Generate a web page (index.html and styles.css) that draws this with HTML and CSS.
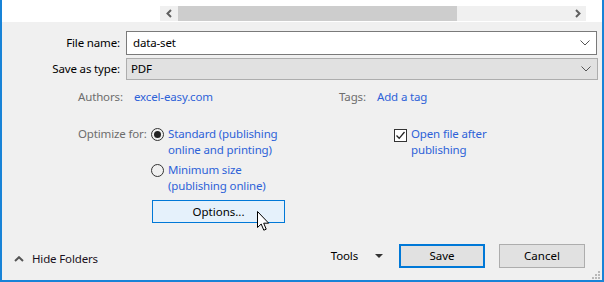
FILE: index.html
```html
<!DOCTYPE html>
<html lang="en">
<head>
  <meta charset="utf-8">
  <title>Save As</title>
  <link rel="stylesheet" href="styles.css">
</head>
<body>
  <div class="window">
    <div class="browser">
      <div class="hscroll">
        <span class="hscroll_arrow">
          <svg width="8" height="9" viewBox="0 0 8 9"><path d="M6 1 L2.5 4.5 L6 8" fill="none" stroke="#606060" stroke-width="2"/></svg>
        </span>
        <span class="hscroll_track"><span class="hscroll_thumb"></span></span>
        <span class="hscroll_arrow">
          <svg width="8" height="9" viewBox="0 0 8 9"><path d="M2 1 L5.5 4.5 L2 8" fill="none" stroke="#606060" stroke-width="2"/></svg>
        </span>
      </div>
    </div>

    <div class="form">
      <label class="form_label">File name:</label>
      <div class="field field-input">
        <span>data-set</span>
        <svg class="chev" width="10" height="6" viewBox="0 0 10 6"><path d="M0.5 0.5 L5 5 L9.5 0.5" fill="none" stroke="#555" stroke-width="1"/></svg>
      </div>
      <label class="form_label">Save as type:</label>
      <div class="field field-select">
        <span>PDF</span>
        <svg class="chev" width="10" height="6" viewBox="0 0 10 6"><path d="M0.5 0.5 L5 5 L9.5 0.5" fill="none" stroke="#555" stroke-width="1"/></svg>
      </div>
    </div>

    <div class="meta">
      <div class="meta_row">
        <div class="meta_col">
          <span class="key key-authors">Authors:</span>
          <a class="link">excel-easy.com</a>
        </div>
        <div class="meta_col">
          <span class="key key-tags">Tags:</span>
          <a class="link">Add a tag</a>
        </div>
      </div>
      <div class="meta_row meta_row-opt">
        <div class="meta_col">
          <span class="key key-opt">Optimize for:</span>
          <div class="radios">
            <label class="radio radio-on"><span class="radio_dot"></span><span class="link">Standard (publishing<br>online and printing)</span></label>
            <label class="radio"><span class="radio_dot"></span><span class="link">Minimum size<br>(publishing online)</span></label>
            <button class="options">Options...</button>
          </div>
        </div>
        <div class="meta_col">
          <label class="check">
            <span class="check_box">
              <svg width="11" height="11" viewBox="0 0 11 11"><path d="M1.5 5.5 L4.2 8.3 L9.5 2" fill="none" stroke="#222" stroke-width="1.3"/></svg>
            </span>
            <span class="link">Open file after<br>publishing</span>
          </label>
        </div>
      </div>
    </div>

    <div class="footer">
      <div class="folders">
        <svg width="10" height="6" viewBox="0 0 10 6"><path d="M1 5 L5 1.2 L9 5" fill="none" stroke="#555" stroke-width="2"/></svg>
        <span>Hide Folders</span>
      </div>
      <div class="actions">
        <div class="tools">
          <span>Tools</span>
          <svg width="8" height="4" viewBox="0 0 8 4"><path d="M0 0 L8 0 L4 4 Z" fill="#333"/></svg>
        </div>
        <button class="btn btn-primary">Save</button>
        <button class="btn">Cancel</button>
      </div>
    </div>

    <svg class="grip" width="8" height="8" viewBox="0 0 8 8">
      <rect x="6" y="0" width="2" height="2" fill="#b8b8b8"/>
      <rect x="3" y="3" width="2" height="2" fill="#b8b8b8"/>
      <rect x="6" y="3" width="2" height="2" fill="#b8b8b8"/>
      <rect x="0" y="6" width="2" height="2" fill="#b8b8b8"/>
      <rect x="3" y="6" width="2" height="2" fill="#b8b8b8"/>
      <rect x="6" y="6" width="2" height="2" fill="#b8b8b8"/>
    </svg>

    <svg class="cursor" width="13" height="21" viewBox="0 0 13 21">
      <path d="M0.5 0.5 L0.5 16.5 L4.2 13 L6.8 19.2 L9.2 18.2 L6.7 12.2 L11.7 12.2 Z" fill="#fff" stroke="#000" stroke-width="1" stroke-linejoin="miter"/>
    </svg>
  </div>
</body>
</html>
```

FILE: styles.css
```css
html,
body {
  margin: 0;
  padding: 0;
}

body {
  width: 604px;
  height: 282px;
  overflow: hidden;
  font-family: "Noto Sans", "Open Sans", sans-serif;
  font-size: 11.5px;
  letter-spacing: -0.15px;
  line-height: 16px;
  color: #000;
}

.window {
  position: relative;
  box-sizing: border-box;
  width: 604px;
  height: 282px;
  display: flex;
  flex-direction: column;
  background: #f0f0f0;
  border: 2px solid #1883d7;
  border-top: 0;
}

/* file list strip with its horizontal scrollbar */
.browser {
  height: 22px;
  background: #fff;
  box-sizing: border-box;
  padding: 6px 16px 0 158px;
}
.hscroll {
  display: flex;
  height: 15px;
  background: #f0f0f0;
}
.hscroll_arrow {
  width: 17px;
  display: flex;
  align-items: center;
  justify-content: center;
}
.hscroll_track {
  flex: 1;
  display: flex;
  padding-left: 1px;
}
.hscroll_thumb {
  width: 279px;
  background: #cdcdcd;
}

/* name + type */
.form {
  display: grid;
  grid-template-columns: 118px 471px;
  grid-template-rows: 24px 22px;
  column-gap: 6px;
  row-gap: 3px;
  margin-top: 9px;
}
.form_label {
  text-align: right;
  align-self: center;
}
.field {
  box-sizing: border-box;
  display: flex;
  align-items: center;
  justify-content: space-between;
  padding: 0 4px 0 6px;
}
.field-input {
  background: #fff;
  border: 1px solid #7a7a7a;
}
.field-select {
  background: #e1e1e1;
  border: 1px solid #adadad;
  padding-left: 4px;
  margin-right: -1px;
}
.chev {
  margin-right: 2px;
}

/* authors, tags, optimize */
.meta {
  padding-left: 76px;
  margin-top: 9px;
}
.meta_row {
  display: flex;
}
.meta_row-opt {
  margin-top: 21px;
}
.meta_col {
  display: flex;
  align-items: flex-start;
}
.meta_col:first-child {
  width: 261px;
}
.key {
  color: #6d6d6d;
  white-space: nowrap;
}
.key-authors {
  width: 56px;
}
.key-tags {
  width: 38px;
}
.key-opt {
  width: 73px;
}
.link {
  color: #2d62d8;
  white-space: nowrap;
}

.radios {
  display: flex;
  flex-direction: column;
  align-items: flex-start;
}
.radio {
  display: flex;
  align-items: flex-start;
  gap: 4px;
  margin-bottom: 4px;
}
.radio_dot {
  box-sizing: border-box;
  width: 13px;
  height: 13px;
  margin-top: 2px;
  border: 1px solid #333;
  border-radius: 50%;
  display: flex;
  align-items: center;
  justify-content: center;
}
.radio-on .radio_dot::after {
  content: "";
  width: 7px;
  height: 7px;
  border-radius: 50%;
  background: #222;
}
.options {
  margin: 2px 0 0 1px;
  width: 133px;
  height: 23px;
  box-sizing: border-box;
  background: #e5f1fb;
  border: 1px solid #0078d7;
  font: inherit;
  color: #000;
  padding: 0;
}

.check {
  display: flex;
  align-items: flex-start;
  gap: 4px;
  margin-left: 55px;
}
.check_box {
  box-sizing: border-box;
  width: 13px;
  height: 13px;
  margin-top: 3px;
  border: 1px solid #333;
  background: #fff;
  display: flex;
  align-items: center;
  justify-content: center;
}

/* bottom bar */
.footer {
  margin-top: auto;
  display: flex;
  align-items: center;
  justify-content: space-between;
  padding: 0 17px 12px 12px;
}
.folders {
  display: flex;
  align-items: center;
  gap: 8px;
  margin-top: 6px;
}
.folders span {
  color: #1a1020;
}
.actions {
  display: flex;
  align-items: center;
}
.tools {
  display: flex;
  align-items: center;
  gap: 17px;
  margin-right: 16px;
}
.btn {
  box-sizing: border-box;
  width: 86px;
  height: 24px;
  margin-left: 14px;
  background: #e1e1e1;
  border: 1px solid #adadad;
  font: inherit;
  color: #000;
  padding: 0;
}
.btn-primary {
  margin-left: 0;
  border: 2px solid #0078d7;
}

.grip {
  position: absolute;
  right: 2px;
  bottom: 1px;
}
.cursor {
  position: absolute;
  left: 255px;
  top: 211px;
}
```
